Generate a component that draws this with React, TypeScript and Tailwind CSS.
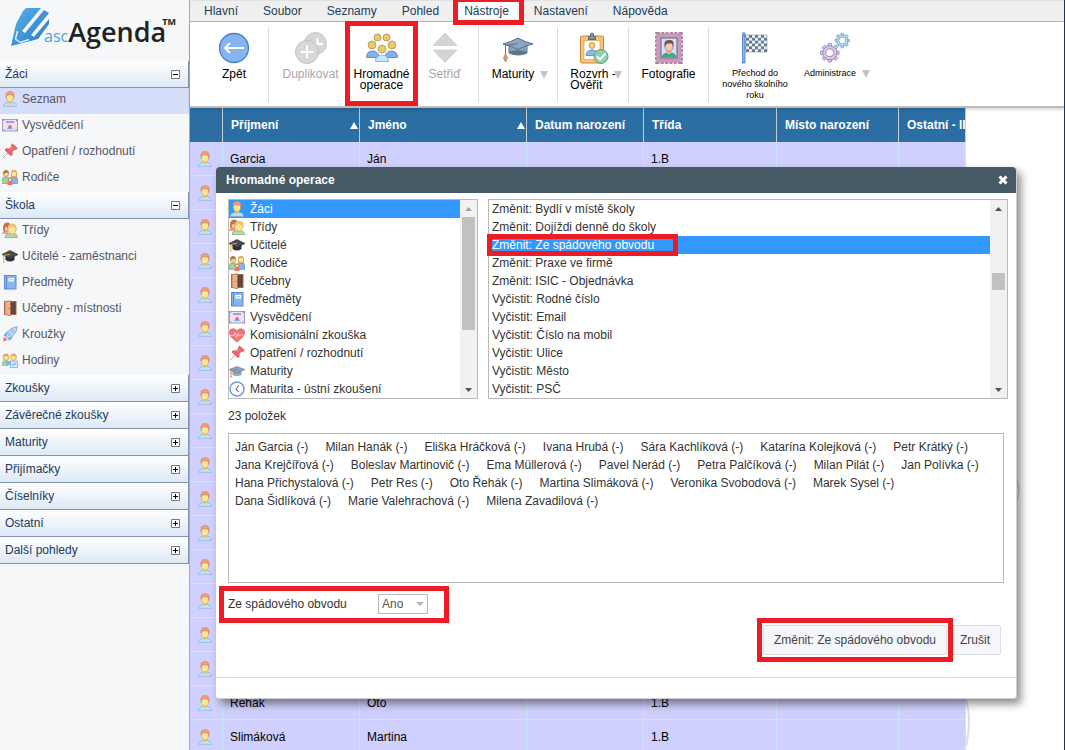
import React from "react";

type IconProps = { className?: string };
type Icon = (p: IconProps) => React.ReactElement;

const icon = (size: number, body: React.ReactNode): Icon =>
  function Drawn({ className = "" }: IconProps) {
    return (
      <svg
        viewBox={`0 0 ${size} ${size}`}
        className={`${size === 16 ? "size-4" : "size-8"} shrink-0 ${className}`}
        aria-hidden="true"
      >
        {body}
      </svg>
    );
  };

const Person = icon(16, (
  <>
    <path d="M1.500 15.300C1.500 12.700 3.500 12 6 11.500h4c2.500.500 4.500 1.200 4.500 3.800z" fill="#c0e2fb" stroke="#8fb4dc" strokeWidth=".8" />
    <path d="M6.300 9h3.400v3.200L8 13.600l-1.700-1.400z" fill="#ecca6c" />
    <path d="M4.500 4.500C4.500 2.500 6 2 8 2s3.500.5 3.500 2.500v2.300C11.500 9 9.900 11 8 11S4.500 9 4.500 6.800z" fill="#ffe78f" stroke="#c9a464" strokeWidth=".8" />
    <path d="M4 6.500V3.700C4 1.500 5.900.500 8.100.500c2.400 0 3.900 1.200 3.900 3.200v2.800L11.200 4.700 9.500 3.900h-3L4.800 4.700z" fill="#f29c78" stroke="#cd8260" strokeWidth=".6" />
  </>
));

const Certificate = icon(16, (
  <>
    <rect x=".5" y="2.500" width="15" height="11.500" fill="#e9e2f4" stroke="#a99cc4" />
    <path d="M0 2l2 2M16 2l-2 2M0 14.500l2-2M16 14.500l-2-2" stroke="#8d7fb0" />
    <path d="M4 5h8" stroke="#7f7399" strokeWidth="1.200" />
    <path d="M5 12l2-2.500h2l2 2.500-2-.5-1 .5-1-.5z" fill="#4d93dc" />
    <circle cx="8" cy="9.500" r="1.400" fill="#e8626b" />
  </>
));

const Pin = icon(16, (
  <>
    <path d="M6 10L.5 15.500" stroke="#aab3bd" strokeWidth="1" />
    <path d="M10.500 1l4.800 4.300-1.300 1.200-1.500-.3-2.500 2.600.2 2.800-1.200 1.200L3 7l1.200-1.300 3 .2 2.500-2.400-.4-1.300z" fill="#ee6468" stroke="#c94c55" strokeWidth=".7" />
    <path d="M10.300 4.500L8 6.800" stroke="#ffb0a8" />
  </>
));

const Parents = icon(16, (
  <>
    <path d="M.5 14.500V10q0-2 2.500-2h2q2.500 0 2.500 2v4.500z" fill="#a5cf9f" stroke="#6f9f72" strokeWidth=".6" />
    <path d="M8.500 14.500V10q0-2 2-2h3q2 0 2 2v4.500z" fill="#86b2ee" stroke="#5688cb" strokeWidth=".6" />
    <circle cx="4" cy="4.800" r="2.700" fill="#f9d98a" stroke="#bb8653" strokeWidth=".7" />
    <path d="M1.200 5V3Q2 1 4 1t2.800 2v2L5.500 3.500z" fill="#ad7450" />
    <path d="M9 8V4q0-3 3-3t3 3v4z" fill="#e7a14e" />
    <circle cx="12" cy="5" r="2.300" fill="#ffe7a0" />
    <path d="M5.500 16v-2q0-1.500 2.500-1.500t2.500 1.500v2z" fill="#ec7272" />
    <circle cx="8" cy="10.800" r="1.800" fill="#ffdf91" stroke="#a9694c" strokeWidth=".7" />
  </>
));

const Classmates = icon(16, (
  <>
    <path d="M0 12q0-3.500 4-3.500h2V12z" fill="#f49d96" />
    <path d="M1 8Q.5.5 5 .5q3.500 0 4 4L6 9.500H2.500z" fill="#c3734c" />
    <path d="M2.500 6L5 4.500 6 9H4q-1.500-1-1.500-3z" fill="#ffc99b" />
    <path d="M3 15.500q0-3.500 4-4h4.500q4 .5 4 4z" fill="#b4dba3" stroke="#7bab77" strokeWidth=".7" />
    <path d="M5.800 6Q6 2 10 2t4.200 4q0 6-4.200 6.200Q5.800 12 5.800 6z" fill="#ffe39b" stroke="#d19e55" strokeWidth=".7" />
    <path d="M5.800 6.800Q5.500 2 10 2t4.200 4.800q-2.500-.3-4.200-2-1.700 1.700-4.200 2z" fill="#ecc474" />
  </>
));

const DarkCap = icon(16, (
  <>
    <path d="M3.500 7v5q4.500 3 9 0V7z" fill="#2c3238" />
    <path d="M0 6.500L8 2.500l8 4-8 4z" fill="#454c53" stroke="#24292e" strokeWidth=".6" />
    <path d="M8 6.200L1.800 7.500V12" fill="none" stroke="#e0a33e" />
    <path d="M.8 14.500l1-3 1 3z" fill="#e0a33e" />
  </>
));

const BlueCap = icon(16, (
  <>
    <path d="M3.500 7v5q4.500 2 9 0V7z" fill="#8ba5bd" />
    <path d="M0 6.500L8 3.500l8 3-8 3.500z" fill="#8aa3bb" stroke="#607f9f" strokeWidth=".6" />
    <path d="M8 6.500L2 7.500V12" fill="none" stroke="#b07a62" />
    <path d="M1 14.500l1-3 1 3z" fill="#cb8968" />
  </>
));

const Book = icon(16, (
  <>
    <rect x="2.500" y="1.500" width="11.500" height="13.500" fill="#87b6ee" stroke="#5b8bd0" />
    <path d="M4.500 1.500V15" stroke="#5b8bd0" />
    <rect x="6.500" y="4" width="5.500" height="3.500" fill="#fff" />
    <path d="M7.500 5.700H11" stroke="#9db9dc" />
  </>
));

const Door = icon(16, (
  <>
    <rect x="2.500" y="1.500" width="11.500" height="13" fill="#563f3b" stroke="#a26c4c" />
    <path d="M11 2v12.500" stroke="#7c5b51" />
    <path d="M3 1.500L8.500.800v15L3 14.500z" fill="#eeb087" stroke="#b4744f" strokeWidth=".8" />
    <circle cx="7" cy="8.500" r=".6" fill="#8b553c" />
  </>
));

const Rocket = icon(16, (
  <>
    <path d="M1 15.500l1-5 3.500 3.500z" fill="#ee7474" />
    <path d="M1.500 9.500l3.500-4h3L4 10.500zM6 12.500L10.500 8v3.500L7 15z" fill="#77a7e4" />
    <path d="M3.500 10Q6.500 1.500 15.200.800 14.500 9 6 12.700z" fill="#bddcf8" stroke="#6c9edb" strokeWidth=".8" />
    <circle cx="10.500" cy="5.300" r="1.400" fill="#d9ecff" stroke="#6a9ddc" strokeWidth=".8" />
    <circle cx="7.300" cy="8.500" r="1" fill="#d9ecff" stroke="#6a9ddc" strokeWidth=".8" />
  </>
));

const Lessons = icon(16, (
  <>
    <path d="M0 13.500V11q0-2.500 4-2.500h2v5z" fill="#a8d69f" stroke="#80b67d" strokeWidth=".6" />
    <path d="M4 9h9v4H4z" fill="#8bb5d7" />
    <circle cx="4" cy="5.500" r="2.900" fill="#ffe39a" stroke="#cf9951" strokeWidth=".8" />
    <circle cx="11.500" cy="5.500" r="2.900" fill="#ffe39a" stroke="#cf9951" strokeWidth=".8" />
    <path d="M1 5q0-3.500 3-3.500T7 5L4 3.800zM8.500 5q0-3.500 3-3.500t3 3.500l-3-1.200z" fill="#e5a45c" />
    <rect x="8.500" y="9" width="7" height="6.500" fill="#d5edff" stroke="#7fb3e0" strokeWidth=".8" />
    <path d="M10 12l1.500 1.500L14 10.500" fill="none" stroke="#5b9ad7" />
  </>
));

const Heart = icon(16, (
  <>
    <path d="M8 15Q.5 9.500.5 5.500.5 1.800 4 1.800 6.800 1.800 8 4q1.200-2.200 4-2.200 3.500 0 3.500 3.700Q15.500 9.500 8 15z" fill="#f2777a" stroke="#d75d65" strokeWidth=".8" />
    <path d="M1.500 8.500H5l1-3 1.500 5L9 6.500l1 2h1.500l1-1 1 1h1" fill="none" stroke="#ffd6d3" strokeWidth=".9" />
  </>
));

const Clock = icon(16, (
  <>
    <circle cx="8" cy="8" r="7" fill="#fff" stroke="#6f9fdd" strokeWidth="1.500" />
    <path d="M9.800 4L7 8.500l3 2.700" fill="none" stroke="#6d7884" strokeWidth="1.100" />
  </>
));

const BackArrow = icon(32, (
  <>
    <circle cx="16" cy="16" r="14.500" fill="#85b4ee" stroke="#4b80c4" strokeWidth="1.300" />
    <path d="M26 16H7M12 11l-5 5 5 5" fill="none" stroke="#fff" strokeWidth="1.800" />
  </>
));

const Duplicate = icon(32, (
  <>
    <circle cx="20.500" cy="11.500" r="11" fill="#d6d6d6" stroke="#c6c6c6" />
    <path d="M22.500 6v6H28" fill="none" stroke="#fff" strokeWidth="2" />
    <circle cx="12" cy="20" r="11.500" fill="#d8d8d8" stroke="#c2c2c2" />
    <path d="M12 13.500v13M5.500 20h13" stroke="#fff" strokeWidth="2" />
  </>
));

const Crowd = icon(32, (
  <>
    <g fill="#eacb70" stroke="#bb964a" strokeWidth=".9">
      <circle cx="11.500" cy="5.500" r="3.500" />
      <circle cx="20.500" cy="5.500" r="3.500" />
      <circle cx="6" cy="13" r="3.900" />
      <circle cx="26" cy="13" r="3.900" />
      <circle cx="16" cy="17" r="3.900" />
    </g>
    <path d="M.5 25.500q0-6.500 6-6.500t6.500 6.500zM19 25.500q.5-6.500 6.500-6.500t6 6.500z" fill="#82b2ea" stroke="#4e80c0" strokeWidth=".8" />
    <path d="M9.500 29.500q0-6.500 6.500-6.500t6.500 6.500z" fill="#c5e7ff" stroke="#75a8d6" strokeWidth=".8" />
  </>
));

const SortArrows = icon(32, (
  <path d="M16 1l12 12.500H4zM4 18h24L16 30.500z" fill="#d4d4d4" stroke="#c2c2c2" strokeWidth=".6" />
));

const BigCap = icon(32, (
  <>
    <path d="M7 12v9q9 4 18 0v-9z" fill="#8ba2b7" stroke="#5d7890" />
    <ellipse cx="16" cy="20.500" rx="8.500" ry="2.300" fill="#5f7486" />
    <path d="M1 12Q9 10 16 6q7 4 15 6-8 1.500-15 5.500Q9 13.500 1 12z" fill="#8aa7c2" stroke="#54738f" />
    <path d="M16 11.500L3.500 13.500V23" fill="none" stroke="#8a6355" />
    <path d="M3.500 22l2 4-2 4-2-4z" fill="#e29a73" stroke="#b26d4c" strokeWidth=".7" />
  </>
));

const Clipboard = icon(32, (
  <>
    <rect x="3.500" y="4" width="23" height="27" rx="1" fill="#f6c476" stroke="#c9893c" />
    <rect x="7" y="8.500" width="16" height="19" fill="#fff" stroke="#d8a55d" strokeWidth=".7" />
    <path d="M11.500 7.500V4.500h2Q13 1 15 1t1.500 3.500h2v3z" fill="#8193a5" stroke="#536779" />
    <circle cx="15" cy="13.500" r="3" fill="#f0d373" stroke="#b99443" strokeWidth=".8" />
    <path d="M9 23.500q0-5.500 6-5.500t6 5.500z" fill="#8ab8ee" stroke="#5687c3" strokeWidth=".8" />
    <circle cx="24" cy="24.500" r="7" fill="#93cfae" stroke="#5aa47b" />
    <path d="M20 24.500l3 3 5.500-6" fill="none" stroke="#fff" strokeWidth="2" />
  </>
));

const Photo = icon(32, (
  <>
    <rect x="4" y="2" width="24" height="28" fill="none" stroke="#8f5d85" strokeWidth="3.500" strokeDasharray="3 1.330" />
    <rect x="4" y="2" width="24" height="28" fill="#c79abc" stroke="#c79abc" strokeWidth="1.500" />
    <rect x="8" y="6" width="16" height="20" fill="#c6e6fb" stroke="#85597e" />
    <path d="M8.500 25.500q0-4.500 7.500-5.500 7.500 1 7.500 5.500z" fill="#43a778" />
    <path d="M13.500 17h5v4L16 22.500 13.500 21z" fill="#edb5a0" />
    <ellipse cx="16" cy="14.500" rx="4" ry="5" fill="#f8c9b5" stroke="#98594f" strokeWidth=".6" />
    <path d="M11.500 15v-4Q12 8 16.500 8t4 4v3l-1.500-3.500h-5z" fill="#7e4b4b" />
  </>
));

const CHECKS = Array.from({ length: 48 }, (_, i) => [i % 8, Math.floor(i / 8)]).filter(([x, y]) => (x + y) % 2 === 0);

const RaceFlag = icon(32, (
  <>
    <rect x="4" y="3" width="24" height="17" fill="#edf3f8" stroke="#8e9ba9" strokeWidth=".6" />
    {CHECKS.map(([x, y]) => (
      <rect key={`${x}-${y}`} x={4 + x * 3} y={3 + y * 2.83} width="3" height="2.830" fill="#667b91" />
    ))}
    <rect x="3.500" y="3" width="2.500" height="28" fill="#8bb6ef" stroke="#477bbe" strokeWidth=".8" />
    <circle cx="4.700" cy="2" r="1.500" fill="#7ba9e6" stroke="#477bbe" strokeWidth=".6" />
  </>
));

const TEETH = [0, 45, 90, 135, 180, 225, 270, 315];

const Gears = icon(32, (
  <>
    {TEETH.map((a) => (
      <rect key={a} x="9" y="11.500" width="3.600" height="5" rx=".6" fill="#d9cbe9" stroke="#9580ae" strokeWidth=".8" transform={`rotate(${a} 10.800 20.800)`} />
    ))}
    <circle cx="10.800" cy="20.800" r="7" fill="#d9cbe9" stroke="#9580ae" strokeWidth=".9" />
    <circle cx="10.800" cy="20.800" r="4" fill="#fff" stroke="#9580ae" strokeWidth=".9" />
    {TEETH.map((a) => (
      <rect key={a} x="22" y="1.200" width="2.600" height="4" rx=".6" fill="#c2e3f4" stroke="#6ba2c0" strokeWidth=".8" transform={`rotate(${a} 23.300 8.500)`} />
    ))}
    <circle cx="23.300" cy="8.500" r="5.600" fill="#c2e3f4" stroke="#6ba2c0" strokeWidth=".9" />
    <circle cx="23.300" cy="8.500" r="3.500" fill="#fff" stroke="#6ba2c0" strokeWidth=".9" />
  </>
));

function Triangle({ up = false, className = "" }: { up?: boolean; className?: string }) {
  return (
    <svg viewBox="0 0 8 8" className={`size-2 shrink-0 fill-current ${className}`} aria-hidden="true">
      <path d={up ? "M0 8L4 1l4 7z" : "M0 0h8L4 8z"} />
    </svg>
  );
}

function Highlight({ className }: { className: string }) {
  return <span aria-hidden="true" className={`pointer-events-none absolute z-20 border-5 border-[#ed1c24] ${className}`} />;
}

function Logo() {
  return (
    <a href="#" aria-label="ascAgenda" className="flex h-[61px] items-start pl-2.5 pt-2">
      <svg viewBox="0 0 40 40" className="size-10 shrink-0" aria-hidden="true">
        <defs>
          <linearGradient id="pencil" x1="0" y1="0" x2="1" y2="1">
            <stop offset="0" stopColor="#58b2ea" />
            <stop offset="1" stopColor="#2b78c6" />
          </linearGradient>
        </defs>
        <path d="M13 3L16 0H31L12 23 15 25 34 2 39 5 21 27 24 29 39 11V16L28 31 1 38 6 16z" fill="url(#pencil)" />
        <path d="M7.500 23L5.500 31l4.500 3.500 9-3" fill="none" stroke="#d9eefb" strokeWidth="1.500" />
      </svg>
      <span className="-ml-1.5 flex items-baseline font-['Open_Sans','Noto_Sans',sans-serif] leading-[48px]">
        <span className="text-[16px] text-[#4aa3e0]">asc</span>
        <span className="text-[27px] font-semibold text-[#222]">Agenda</span>
        <span className="-ml-1 self-start text-[9px] font-bold leading-[28px] text-[#222]">TM</span>
      </span>
    </a>
  );
}

type Section = { title: string; items?: { label: string; Glyph: Icon; active?: boolean }[] };

const SECTIONS: Section[] = [
  {
    title: "Žáci",
    items: [
      { label: "Seznam", Glyph: Person, active: true },
      { label: "Vysvědčení", Glyph: Certificate },
      { label: "Opatření / rozhodnutí", Glyph: Pin },
      { label: "Rodiče", Glyph: Parents },
    ],
  },
  {
    title: "Škola",
    items: [
      { label: "Třídy", Glyph: Classmates },
      { label: "Učitelé - zaměstnanci", Glyph: DarkCap },
      { label: "Předměty", Glyph: Book },
      { label: "Učebny - místnosti", Glyph: Door },
      { label: "Kroužky", Glyph: Rocket },
      { label: "Hodiny", Glyph: Lessons },
    ],
  },
  { title: "Zkoušky" },
  { title: "Závěrečné zkoušky" },
  { title: "Maturity" },
  { title: "Přijímačky" },
  { title: "Číselníky" },
  { title: "Ostatní" },
  { title: "Další pohledy" },
];

function Sidebar() {
  return (
    <nav className="w-[190px] shrink-0 border-r border-[#a4abb5] bg-[#f5f7f9] text-[#556]">
      <Logo />
      {SECTIONS.map(({ title, items }) => (
        <section key={title}>
          <button
            aria-expanded={!!items}
            className="flex h-[27px] w-full items-center justify-between border-b border-r border-[#8393ab] bg-linear-to-b from-white to-[#dde9f5] pl-[5px] pr-2 text-[#243a5a]"
          >
            {title}
            <svg viewBox="0 0 9 9" className="size-[9px]" aria-hidden="true">
              <path d="M.5.5h8v8h-8z" fill="#fff" stroke="#777" />
              <path d={items ? "M2 4.500h5" : "M2 4.500h5M4.500 2v5"} stroke="#000" />
            </svg>
          </button>
          {items?.map(({ label, Glyph, active }) => (
            <a
              key={label}
              href="#"
              className={`flex h-[26px] items-center gap-1 pb-1 pl-0.5 ${active ? "bg-[#d6ddf8]" : ""}`}
            >
              <Glyph />
              {label}
            </a>
          ))}
        </section>
      ))}
    </nav>
  );
}

const MENU = ["Hlavní", "Soubor", "Seznamy", "Pohled", "Nástroje", "Nastavení", "Nápověda"];

function MenuBar() {
  return (
    <div className="flex h-[22px] gap-[25px] border-b border-t border-b-[#aab6cf] border-t-[#e2e2e2] bg-[#efefef] pl-3.5 text-[#243a5a]">
      {MENU.map((m) => (
        <button key={m} className="relative h-5">
          {m === "Nástroje" && (
            <>
              <span className="absolute -inset-x-2 inset-y-0 bg-[#f7fafe]" />
              <Highlight className="-bottom-1 -left-[11px] -right-[15px] -top-1" />
            </>
          )}
          <span className="relative">{m}</span>
        </button>
      ))}
    </div>
  );
}

type ToolProps = {
  Glyph: Icon;
  width: string;
  children: React.ReactNode;
  disabled?: boolean;
  menu?: boolean;
  tight?: boolean;
  small?: boolean;
  marked?: boolean;
};

function Tool({ Glyph, width, children, disabled, menu, tight, small, marked }: ToolProps) {
  return (
    <button
      disabled={disabled}
      className={`relative flex flex-col items-center ${small ? "gap-1" : "gap-[5px]"} ${width} ${disabled ? "text-[#a6a6a6]" : "text-black"}`}
    >
      <Glyph />
      <span
        className={`flex gap-1.5 leading-[11px] ${small ? "text-[9px]" : ""} ${tight ? "items-start pl-1.5 text-left" : "items-center"} ${menu && !tight ? "pl-1" : ""}`}
      >
        <span>{children}</span>
        {menu && <Triangle className={`text-[#c4c4c4] ${tight ? "-ml-2 mt-0.5" : ""}`} />}
      </span>
      {marked && <Highlight className="-inset-x-[7px] -bottom-1 -top-[11px]" />}
    </button>
  );
}

function ToolGroup({ children, last }: { children: React.ReactNode; last?: boolean }) {
  return <div className={`flex h-[75px] pt-[5px] ${last ? "" : "border-r border-[#dcdcdc]"}`}>{children}</div>;
}

function Toolbar() {
  return (
    <div className="relative z-1 flex h-[86px] border-b-2 border-[#bcbcbc] bg-white pl-2.5 pt-[5px] shadow-[0_2px_3px_rgba(0,0,0,0.15)]">
      <ToolGroup>
        <Tool Glyph={BackArrow} width="w-[68px]">Zpět</Tool>
      </ToolGroup>
      <ToolGroup>
        <Tool Glyph={Duplicate} width="w-[83px]" disabled>Duplikovat</Tool>
        <Tool Glyph={Crowd} width="w-[59px]" marked>Hromadné operace</Tool>
        <Tool Glyph={SortArrows} width="w-[67px]" disabled>Setřiď</Tool>
      </ToolGroup>
      <ToolGroup>
        <Tool Glyph={BigCap} width="w-[78px]" menu>Maturity</Tool>
      </ToolGroup>
      <ToolGroup>
        <Tool Glyph={Clipboard} width="w-[70px]" menu tight>
          Rozvrh&nbsp;-<br />Ověřit
        </Tool>
      </ToolGroup>
      <ToolGroup>
        <Tool Glyph={Photo} width="w-[79px]">Fotografie</Tool>
      </ToolGroup>
      <ToolGroup last>
        <Tool Glyph={RaceFlag} width="w-[92px]" small>
          Přechod do<br />nového školního<br />roku
        </Tool>
        <Tool Glyph={Gears} width="w-[68px]" small menu>Administrace</Tool>
      </ToolGroup>
    </div>
  );
}

const PUPILS: [string, string][] = [
  ["Ján", "Garcia"], ["Milan", "Hanák"], ["Eliška", "Hráčková"], ["Ivana", "Hrubá"], ["Sára", "Kachlíková"],
  ["Katarína", "Kolejková"], ["Petr", "Krátký"], ["Jana", "Krejčířová"], ["Boleslav", "Martinovič"],
  ["Ema", "Müllerová"], ["Pavel", "Nerád"], ["Petra", "Palčíková"], ["Milan", "Pilát"], ["Jan", "Polívka"],
  ["Hana", "Přichystalová"], ["Petr", "Res"], ["Oto", "Řehák"], ["Martina", "Slimáková"],
  ["Veronika", "Svobodová"], ["Marek", "Sysel"], ["Dana", "Šidlíková"], ["Marie", "Valehrachová"],
  ["Milena", "Zavadilová"],
];

const PAGE_ROWS = 18;

const HEAD = [
  { label: "Příjmení", sort: true, width: "w-[137px]" },
  { label: "Jméno", sort: true, width: "w-[167px]" },
  { label: "Datum narození", width: "w-[117px]" },
  { label: "Třída", width: "w-[133px]" },
  { label: "Místo narození", width: "w-[122px]" },
  { label: "Ostatní - II", width: "w-[67px]" },
];

function PupilTable() {
  const cell = "border-b border-r border-[#cbe6fc] pl-[7px]";
  return (
    <table className="w-[776px] table-fixed border-separate border-spacing-0 text-left">
      <thead>
        <tr className="h-[34px] bg-[#2b6ea3] text-white">
          <th className="w-[33px] border-r border-[#c3cbd3]" aria-label="Ikona" />
          {HEAD.map(({ label, sort, width }) => (
            <th key={label} className={`${width} overflow-hidden whitespace-nowrap border-r border-[#c3cbd3] pl-2 font-bold`}>
              <span className="flex items-center justify-between pr-px">
                {label}
                {sort && <Triangle up />}
              </span>
            </th>
          ))}
        </tr>
      </thead>
      <tbody className="bg-[#d0d0ff] text-black">
        {PUPILS.slice(0, PAGE_ROWS).map(([first, last]) => (
          <tr key={last} className="h-[34px]">
            <td className={cell}><Person /></td>
            <td className={cell}>{last}</td>
            <td className={cell}>{first}</td>
            <td className={cell} />
            <td className={cell}>1.B</td>
            <td className={cell} />
            <td className={cell} />
          </tr>
        ))}
      </tbody>
    </table>
  );
}

const AGENDAS: [string, Icon][] = [
  ["Žáci", Person], ["Třídy", Classmates], ["Učitelé", DarkCap], ["Rodiče", Parents], ["Učebny", Door],
  ["Předměty", Book], ["Vysvědčení", Certificate], ["Komisionální zkouška", Heart],
  ["Opatření / rozhodnutí", Pin], ["Maturity", BlueCap], ["Maturita - ústní zkoušení", Clock],
];

const ACTIONS = [
  "Změnit: Bydlí v místě školy", "Změnit: Dojíždi denně do školy", "Změnit: Ze spádového obvodu",
  "Změnit: Praxe ve firmě", "Změnit: ISIC - Objednávka", "Vyčistit: Rodné číslo", "Vyčistit: Email",
  "Vyčistit: Číslo na mobil", "Vyčistit: Ulice", "Vyčistit: Město", "Vyčistit: PSČ",
];

function ScrollBar({ atTop, thumb }: { atTop?: boolean; thumb: string }) {
  return (
    <div aria-hidden="true" className="flex w-[17px] shrink-0 flex-col items-center bg-[#f1f1f1]">
      <svg viewBox="0 0 17 17" className="size-[17px]">
        <path d="M5 11l3.500-4 3.500 4z" fill={atTop ? "#a3a3a3" : "#505050"} />
      </svg>
      <div className="w-full flex-1 px-0.5">
        <div className={`bg-[#c1c1c1] ${thumb}`} />
      </div>
      <svg viewBox="0 0 17 17" className="size-[17px]">
        <path d="M5 7l3.500 4L12 7z" fill="#505050" />
      </svg>
    </div>
  );
}

function BulkDialog() {
  return (
    <div
      role="dialog"
      aria-labelledby="dialog-title"
      className="absolute left-[216px] right-[47px] top-[167px] z-10 rounded-t-[4px] rounded-b-[3px] border-b border-r border-[#cfcfcf] bg-white text-[#333] shadow-[4px_5px_8px_rgba(0,0,0,0.45)]"
    >
      <header className="flex h-[26px] items-center justify-between rounded-t-[4px] bg-[#465a65] pl-2.5 pr-2 text-white">
        <h2 id="dialog-title" className="font-bold">Hromadné operace</h2>
        <button aria-label="Zavřít">
          <svg viewBox="0 0 10 10" className="size-2.5">
            <path d="M1.500 1.500l7 7M8.500 1.500l-7 7" stroke="#fff" strokeWidth="3" />
          </svg>
        </button>
      </header>

      <div className="pb-[22px] pl-3 pr-2 pt-1.5">
        <div className="flex gap-2.5">
          <div className="flex w-[250px] shrink-0 border border-[#b9b9b9]">
            <ul role="listbox" aria-label="Agenda" className="flex-1">
              {AGENDAS.map(([label, Glyph], i) => (
                <li
                  key={label}
                  role="option"
                  aria-selected={i === 0}
                  className={`flex h-[18px] items-center gap-[5px] ${i === 0 ? "bg-[#3399ff] text-white" : ""}`}
                >
                  <Glyph />
                  {label}
                </li>
              ))}
            </ul>
            <ScrollBar atTop thumb="h-[113px]" />
          </div>
          <div className="flex flex-1 border border-[#b9b9b9]">
            <ul role="listbox" aria-label="Operace" className="flex-1">
              {ACTIONS.map((label, i) => (
                <li
                  key={label}
                  role="option"
                  aria-selected={i === 2}
                  className={`relative h-[18px] pl-[3px] ${i === 2 ? "bg-[#3399ff] text-white" : ""}`}
                >
                  {label}
                  {i === 2 && <Highlight className="-left-0.5 -top-0.5 h-[22px] w-[191px]" />}
                </li>
              ))}
            </ul>
            <ScrollBar thumb="mt-14 h-[17px]" />
          </div>
        </div>

        <p className="flex h-[34px] items-center">23 položek</p>

        <div className="mr-1 flex h-[150px] flex-wrap content-start gap-x-[17px] border border-[#b9b9b9] px-1.5 pt-1">
          {PUPILS.map(([first, last]) => (
            <span key={last}>{first} {last} (-)</span>
          ))}
        </div>

        <div className="flex h-[42px]">
          <div className="relative flex items-center">
            <label htmlFor="district" className="w-[150px]">Ze spádového obvodu</label>
            <span className="relative flex">
              <select
                id="district"
                defaultValue="Ano"
                className="h-5 w-[50px] appearance-none rounded-none border border-[#b9b9b9] bg-white pl-[3px] leading-[18px] text-[#555]"
              >
                <option>Ano</option>
                <option>Ne</option>
              </select>
              <svg viewBox="0 0 8 4" className="pointer-events-none absolute right-1 top-2 h-1 w-2" aria-hidden="true">
                <path d="M0 0h8L4 4z" fill="#b5b5b5" />
              </svg>
            </span>
            <Highlight className="-left-[9px] -right-[21px] bottom-0.5 top-[3px]" />
          </div>
        </div>

        <div className="flex justify-end gap-0.5 pr-[7px]">
          <button className="relative h-[30px] rounded-xs border border-[#dcdde3] bg-[#f5f6fa] px-2.5 text-[#444]">
            Změnit: Ze spádového obvodu
            <Highlight className="-inset-x-[7px] -inset-y-2" />
          </button>
          <button className="h-[30px] rounded-xs border border-[#dcdde3] bg-[#f5f6fa] px-2.5 text-[#444]">Zrušit</button>
        </div>
      </div>
      <footer className="h-[21px] border-t border-[#dadada]" />
    </div>
  );
}

export default function App() {
  return (
    <div className="relative flex h-screen overflow-hidden border-r border-[#26324a] bg-white font-['Liberation_Sans',Arial,sans-serif] text-[12px] leading-[18px]">
      <Sidebar />
      <main className="min-w-0 flex-1">
        <MenuBar />
        <Toolbar />
        <div className="relative">
          <PupilTable />
          <svg viewBox="0 0 60 300" className="absolute left-[776px] top-[350px] h-[300px] w-[60px]" aria-hidden="true">
            <path d="M0 242q6 20 0 46M50 20q6 12 0 24" fill="none" stroke="#dedede" strokeWidth="2" />
          </svg>
        </div>
      </main>
      <BulkDialog />
    </div>
  );
}
